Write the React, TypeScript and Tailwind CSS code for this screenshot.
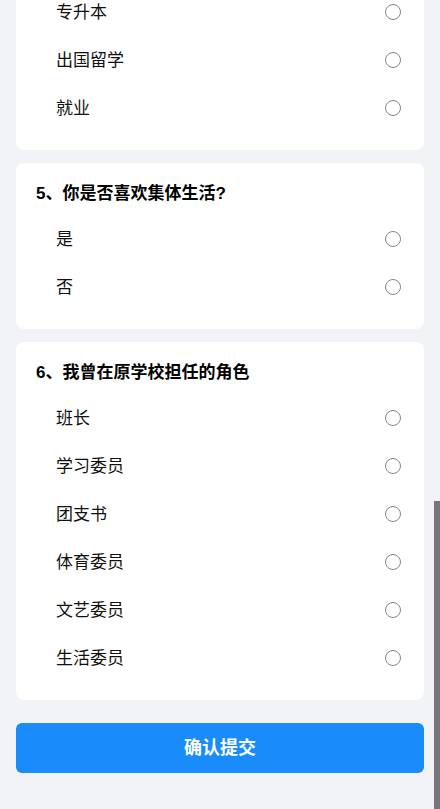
import { useState } from 'react'

// earlier questions sit above the fold; the page is shown scrolled to the end
const questions = [
  { id: 4, title: '4、毕业后你的打算是?', options: ['考研', '专升本', '出国留学', '就业'] },
  { id: 5, title: '5、你是否喜欢集体生活?', options: ['是', '否'] },
  { id: 6, title: '6、我曾在原学校担任的角色', options: ['班长', '学习委员', '团支书', '体育委员', '文艺委员', '生活委员'] },
]

export default function App() {
  const [answers, setAnswers] = useState<Record<number, string>>({})

  return (
    <div
      className="relative h-[809px] w-full overflow-hidden bg-[#f2f3f7]"
      style={{ fontFamily: '"Liberation Sans", "Noto Sans CJK SC", sans-serif' }}
    >
      {/* content is scrolled to the bottom: overflow runs off the top */}
      <div className="flex h-full flex-col justify-end px-4 pb-[36px]">
        <div className="flex flex-col gap-[13px]">
          {questions.map((q) => (
            <div key={q.id} className="shrink-0 rounded-lg bg-white pl-5 pr-5 pt-[19px] pb-[18px]">
              <div className="text-[17px] leading-6 font-bold text-black">{q.title}</div>
              <div className="mt-[9px] flex flex-col">
                {q.options.map((opt) => {
                  const checked = answers[q.id] === opt
                  return (
                    <div
                      key={opt}
                      onClick={() => setAnswers({ ...answers, [q.id]: opt })}
                      className="flex h-12 cursor-pointer items-center justify-between pl-5 pr-[3px]"
                    >
                      <span className="pt-px text-[17px] leading-6 text-[#111]">{opt}</span>
                      <span
                        className={
                          checked
                            ? 'flex h-4 w-4 items-center justify-center rounded-full border border-[#1989fa]'
                            : 'flex h-4 w-4 items-center justify-center rounded-full border border-[#858585]'
                        }
                      >
                        {checked && <span className="h-2 w-2 rounded-full bg-[#1989fa]" />}
                      </span>
                    </div>
                  )
                })}
              </div>
            </div>
          ))}
        </div>
        <button className="mt-[23px] h-[50px] w-full shrink-0 rounded-md bg-[#1a8bfb] text-[18px] font-bold text-white">
          确认提交
        </button>
      </div>

      {/* scrollbar thumb */}
      <div className="absolute right-0 top-[501px] h-[308px] w-[6px] bg-[#77777b]" />
    </div>
  )
}
